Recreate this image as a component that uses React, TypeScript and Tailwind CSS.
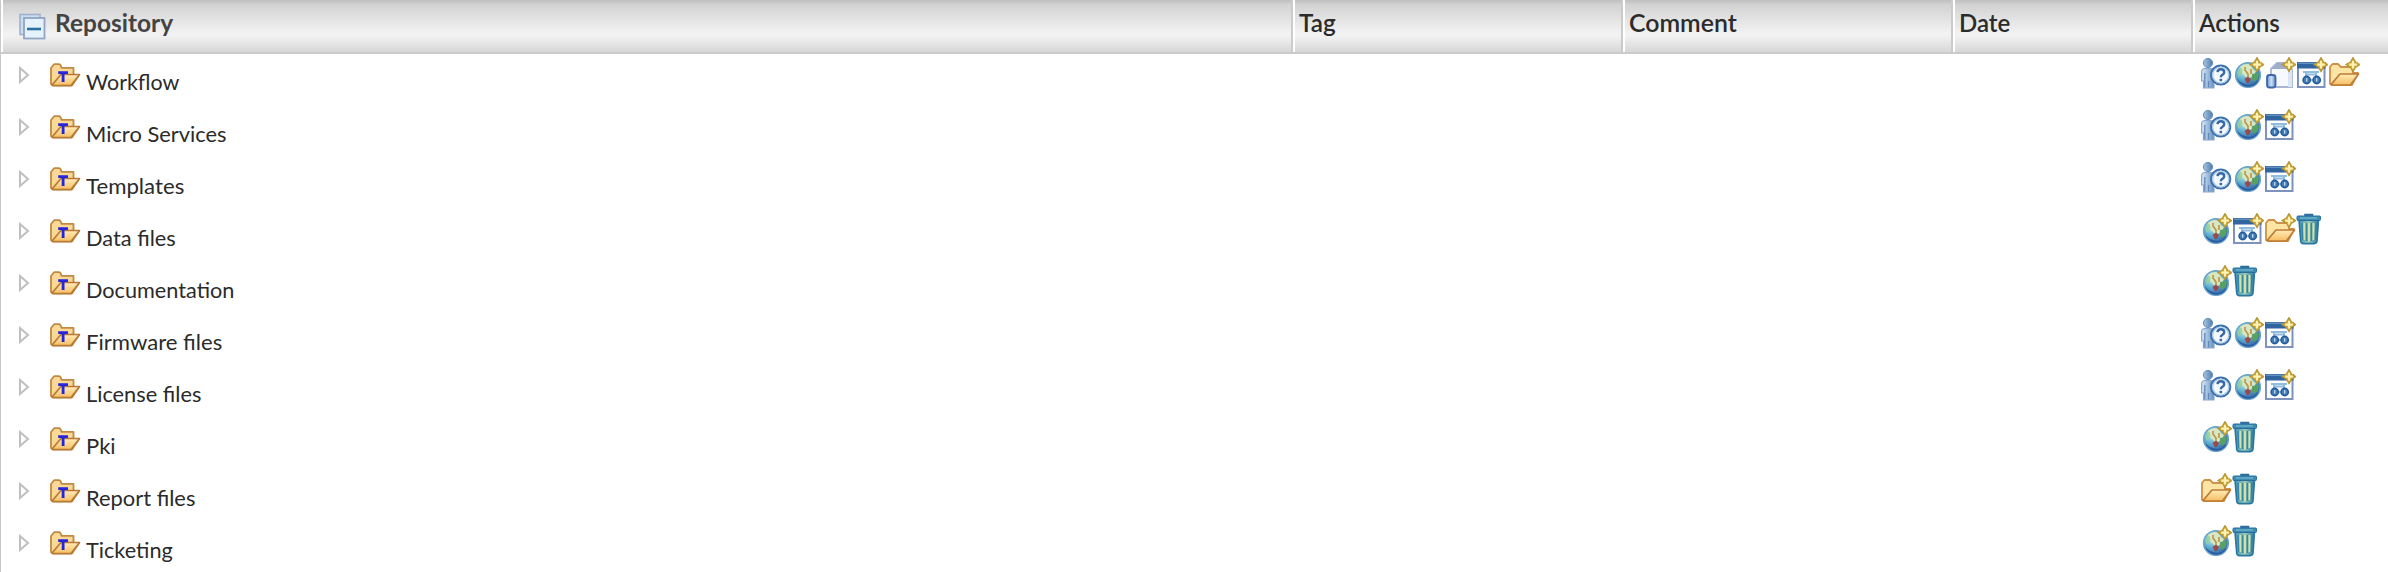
import React from "react";

type Action = "help" | "globe" | "doc" | "window" | "folder" | "trash";

interface Entry {
  name: string;
  fit: string;
  actions: Action[];
}

const entries: Entry[] = [
  { name: "Workflow", fit: "scale-x-[0.975]", actions: ["help", "globe", "doc", "window", "folder"] },
  { name: "Micro Services", fit: "scale-x-[0.995]", actions: ["help", "globe", "window"] },
  { name: "Templates", fit: "scale-x-[1.01]", actions: ["help", "globe", "window"] },
  { name: "Data files", fit: "scale-x-[0.99]", actions: ["globe", "window", "folder", "trash"] },
  { name: "Documentation", fit: "scale-x-[0.985]", actions: ["globe", "trash"] },
  { name: "Firmware files", fit: "scale-x-[1.005]", actions: ["help", "globe", "window"] },
  { name: "License files", fit: "scale-x-[0.99]", actions: ["help", "globe", "window"] },
  { name: "Pki", fit: "scale-x-[1]", actions: ["globe", "trash"] },
  { name: "Report files", fit: "scale-x-[0.995]", actions: ["folder", "trash"] },
  { name: "Ticketing", fit: "scale-x-[0.985]", actions: ["globe", "trash"] },
];

const Spark = () => (
  <g>
    <path d="M25 0.6 27.6 5 32 7.6 27.6 10.2 25 14.6 22.4 10.2 18 7.6 22.4 5Z" fill="#d0ab36" stroke="#b8942f" strokeWidth="1.2" />
    <path d="M25 3.8V11.4M21.2 7.6H28.8" stroke="#fff0b8" strokeWidth="2.2" />
  </g>
);

const Help = () => (
  <>
    <path d="M3.5 31V24H1.6V14.5Q1.6 11.5 5 11.5H11Q14 11.5 14 15V31Z" fill="url(#person)" stroke="#8aa6cf" strokeWidth="1.2" />
    <circle cx="8" cy="6" r="4.6" fill="url(#head)" stroke="#668fbd" strokeWidth="1" />
    <path d="M4.8 16V30.5M8.5 24V30.5" stroke="#6189ba" strokeWidth="1.3" />
    <circle cx="20.7" cy="18" r="9.6" fill="#f4f8fc" stroke="#3c71ae" strokeWidth="2" />
    <circle cx="20.7" cy="18" r="8" fill="none" stroke="#a9c8e5" strokeWidth="1.2" />
    <path d="M17.5 15.2Q17.8 12.3 20.8 12.3 24.2 12.3 24.2 15.2 24.2 16.7 22.5 17.8 20.8 18.9 20.8 20.2" fill="none" stroke="#366aa7" strokeWidth="2.4" />
    <rect x="19.5" y="21.8" width="2.6" height="2.4" fill="#366aa7" />
  </>
);

const Globe = () => (
  <>
    <circle cx="16" cy="18" r="12.3" fill="url(#globe)" stroke="#6aa3c6" strokeWidth="1.6" />
    <path d="M8 10Q12 6 18 7.5L21 12 24 14 22 18 18 21 15 21 11 17 8 15Z" fill="#d9e6c2" />
    <path d="M5 15 9 10 10.5 14 9.5 18 7 20Z" fill="#8fcf9a" opacity=".8" />
    <path d="M20 17 27 16 26 22 22 25 20 22Z" fill="#57a064" />
    <path d="M12.5 22 16 19.5 19 22 17.5 25.5 15 26.5Z" fill="#9a4a4c" />
    <path d="M13 10V13L16 17V20M19 12V17" stroke="#b8934b" strokeWidth="1.6" fill="none" />
    <path d="M4.5 21Q8 29.5 16 29.8 24 29.5 27 23 22 28.5 16 27.8 9 27 4.5 21Z" fill="#2c5ca6" />
    <Spark />
  </>
);

const Doc = () => (
  <>
    <path d="M7 12 13 6H24L28 12V30H7Z" fill="#f6f9fd" stroke="#a8b5d0" strokeWidth="1.8" />
    <path d="M7 12 13 6H25V12Z" fill="#9faccc" />
    <path d="M24 13H28V30H24Z" fill="#dce5f3" />
    <rect x="3" y="18" width="8.5" height="12.5" rx="2.5" fill="url(#tube)" stroke="#3b68aa" strokeWidth="1.8" />
    <Spark />
  </>
);

const WindowIcon = () => (
  <>
    <rect x="2" y="6" width="26.5" height="24" fill="#fcfdff" stroke="#7e92bd" strokeWidth="2" />
    <rect x="1" y="5" width="28.5" height="6.5" fill="#30659f" />
    <path d="M2 6.2H28" stroke="#79a4cc" strokeWidth="1" />
    <path d="M7 15H23M10 15V20M20 15V20M10 17.5H20" stroke="#91bbdf" strokeWidth="2" fill="none" />
    <path d="M13 23H18" stroke="#7ea4ca" strokeWidth="1.5" />
    <circle cx="10.7" cy="23" r="3.7" fill="#427bb6" stroke="#245895" strokeWidth="1.4" />
    <circle cx="20.7" cy="23" r="3.7" fill="#427bb6" stroke="#245895" strokeWidth="1.4" />
    <path d="M10.7 21.2V24.5M20.7 21.2V24.5" stroke="#c8e0f2" strokeWidth="1.3" />
    <Spark />
  </>
);

const FolderIcon = () => (
  <>
    <path d="M2 27V10L4.5 7H10L13 10H25V16H30L24 28H4Z" fill="#fce4a5" stroke="#cf9147" strokeWidth="1.8" strokeLinejoin="round" />
    <path d="M3 27.5 12 17H30.5L22.5 28H4Z" fill="url(#gold)" stroke="#bd7b36" strokeWidth="1.7" strokeLinejoin="round" />
    <Spark />
  </>
);

const Trash = () => (
  <>
    <path d="M3 7H22.5L21 28Q20.7 30.6 18 30.6H7.5Q4.9 30.6 4.7 28Z" fill="url(#can)" stroke="#2877a2" strokeWidth="1.6" />
    <path d="M8.3 10V27M13 10V28M17.5 10V27" stroke="#d0e3a4" strokeWidth="2" />
    <path d="M10.6 10V28M15.3 10V28M6 10 6.6 27M20 10 19.3 27" stroke="#3483a8" strokeWidth="1.5" />
    <path d="M9 3V1.5H16.5V3" fill="#3d80ad" stroke="#286c9c" strokeWidth="1.5" />
    <rect x="1" y="3" width="23.5" height="4.5" rx="1" fill="#3b8bb5" stroke="#286f9e" />
    <path d="M4 5H21" stroke="#8ac2cf" strokeWidth="1" />
  </>
);

const drawings: Record<Action, () => React.JSX.Element> = {
  help: Help,
  globe: Globe,
  doc: Doc,
  window: WindowIcon,
  folder: FolderIcon,
  trash: Trash,
};

const Gradients = () => (
  <defs>
    <linearGradient id="person"><stop stopColor="#dce8f6" /><stop offset="1" stopColor="#6691c1" /></linearGradient>
    <linearGradient id="head"><stop stopColor="#a9c6e2" /><stop offset="1" stopColor="#4d7eae" /></linearGradient>
    <radialGradient id="globe" cx=".35" cy=".3" r=".75"><stop stopColor="#cfedf6" /><stop offset=".55" stopColor="#58aacd" /><stop offset="1" stopColor="#285fa8" /></radialGradient>
    <linearGradient id="tube"><stop stopColor="#6590c8" /><stop offset=".5" stopColor="#cfe1f6" /><stop offset="1" stopColor="#638dc7" /></linearGradient>
    <linearGradient id="gold" x2="0" y2="1"><stop stopColor="#ffedb8" /><stop offset="1" stopColor="#f6bd61" /></linearGradient>
    <linearGradient id="can"><stop stopColor="#3d91b9" /><stop offset=".5" stopColor="#9fcab0" /><stop offset="1" stopColor="#2d7ba8" /></linearGradient>
  </defs>
);

const ActionIcon = ({ kind }: { kind: Action }) => {
  const Drawing = drawings[kind];
  return (
    <svg className="size-8 shrink-0" viewBox="0 0 32 32">
      <Gradients />
      <Drawing />
    </svg>
  );
};

const TypeFolder = () => (
  <svg className="mt-[9px] ml-[19px] h-6 w-8 shrink-0" viewBox="0 0 32 24">
    <Gradients />
    <path d="M2 21V5L4.5 2Q5 1.2 6 1.2H10Q11.5 1.2 12.5 4.8H24.5V12H30L23 22.5H4Z" fill="#f9d995" stroke="#c08a43" strokeWidth="1.8" strokeLinejoin="round" />
    <path d="M3 22 12 11.5H30.5L22 22.5H4Z" fill="url(#gold)" stroke="#b77a38" strokeWidth="1.7" strokeLinejoin="round" />
    <path d="M9.2 9.6H19M14.1 9.6V19" stroke="#2525dd" strokeWidth="2.8" fill="none" />
  </svg>
);

const CollapseAll = () => (
  <svg className="mt-[13px] ml-[15px] h-[27px] w-7 shrink-0" viewBox="0 0 28 27">
    <rect x="2" y="1.5" width="20" height="20" fill="#c8dfef" stroke="#a1b1cc" strokeWidth="1.6" />
    <rect x="6" y="5" width="20.5" height="20.5" fill="#e4f2fb" stroke="#92a4c3" strokeWidth="1.8" />
    <path d="M9 16H23" stroke="#2d6f9d" strokeWidth="2.6" />
  </svg>
);

const columns = [
  { title: "Tag", width: "w-[330px]", fit: "scale-x-[1.01]" },
  { title: "Comment", width: "w-[330px]", fit: "scale-x-[1.035]" },
  { title: "Date", width: "w-[240px]", fit: "scale-x-[1]" },
  { title: "Actions", width: "grow", fit: "scale-x-[1.005]" },
];

const fill = "bg-[linear-gradient(#bfbfbf_0px,#d3d3d3_5px,#f3f3f3_34px,#f0f0f0_37px,#d7d7d7_52px)]";

export default function App() {
  return (
    <main className="h-[572px] w-[2388px] overflow-hidden border-l border-[#c8c8c8] bg-white font-['Lato',sans-serif] text-[22px] leading-8 text-[#2b2b2b]">
      <header className="flex h-[54px] border-b-2 border-[#cbcbcb] pl-0.5 text-[24px] font-semibold">
        <div className={`flex w-[1290px] shrink-0 border-r-2 border-[#cbcbcb] ${fill}`}>
          <CollapseAll />
          <span className="mt-[7px] ml-[9px] inline-block origin-left scale-x-[1.02] font-bold text-[#444]">Repository</span>
        </div>
        {columns.map((c) => (
          <div key={c.title} className={`shrink-0 border-l-2 border-l-white ${c.title === "Actions" ? "" : "border-r-2 border-r-[#cbcbcb]"} pl-1 ${c.width} ${fill}`}>
            <span className={`mt-[7px] inline-block origin-left ${c.fit}`}>{c.title}</span>
          </div>
        ))}
      </header>
      {entries.map((e) => (
        <div key={e.name} className="flex h-[52px]">
          <div className="flex w-[2199px] shrink-0">
            <svg className="mt-3 ml-[17px] h-[18px] w-3 shrink-0" viewBox="0 0 12 18">
              <path d="M2 2V16L10 9Z" fill="#fff" stroke="#bfbfbf" strokeWidth="2" />
            </svg>
            <TypeFolder />
            <span className={`mt-3 ml-[5px] inline-block origin-left whitespace-nowrap ${e.fit}`}>{e.name}</span>
          </div>
          <div className="flex pt-[3px]">
            {e.actions.map((a) => (
              <ActionIcon key={a} kind={a} />
            ))}
          </div>
        </div>
      ))}
    </main>
  );
}
